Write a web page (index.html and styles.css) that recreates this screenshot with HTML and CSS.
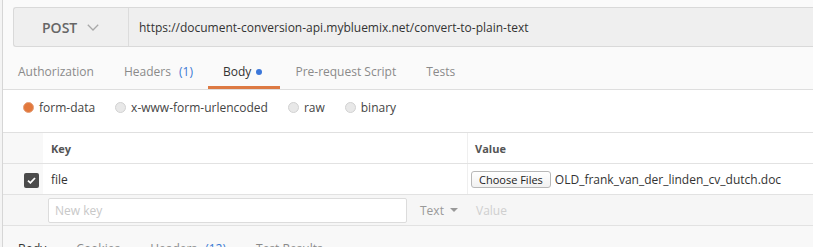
FILE: index.html
```html
<!DOCTYPE html>
<html lang="en">
<head>
    <meta charset="UTF-8">
    <title>POST convert-to-plain-text</title>
    <link rel="stylesheet" href="styles.css">
</head>
<body>

    <div class="app">
        <!-- barra de la petición -->
        <div class="url-row">
            <div class="url-bar">
                <div class="method">
                    POST
                    <svg class="chevron" width="12" height="7" viewBox="0 0 12 7"><polyline points="0.8,0.8 6,6 11.2,0.8" fill="none" stroke="#a8a8a8" stroke-width="1.3"/></svg>
                </div>
                <div class="url">https://document-conversion-api.mybluemix.net/convert-to-plain-text</div>
            </div>
        </div>

        <nav class="tabs">
            <div class="tab">Authorization</div>
            <div class="tab">Headers <span class="count">(1)</span></div>
            <div class="tab active">Body <span class="dot"></span></div>
            <div class="tab">Pre-request Script</div>
            <div class="tab">Tests</div>
        </nav>

        <div class="body-types">
            <label class="option"><span class="radio checked"></span>form-data</label>
            <label class="option"><span class="radio"></span>x-www-form-urlencoded</label>
            <label class="option"><span class="radio"></span>raw</label>
            <label class="option"><span class="radio"></span>binary</label>
        </div>

        <div class="kv">
            <div class="kv-row kv-head">
                <div class="cell check-col"></div>
                <div class="cell key-col">Key</div>
                <div class="cell value-col">Value</div>
            </div>
            <div class="kv-row">
                <div class="cell check-col">
                    <span class="checkbox">
                        <svg width="9" height="7" viewBox="0 0 9 7"><polyline points="1,3.6 3.4,5.8 8,1" fill="none" stroke="#fff" stroke-width="1.8"/></svg>
                    </span>
                </div>
                <div class="cell key-col">file</div>
                <div class="cell value-col">
                    <button class="file-button">Choose Files</button>
                    <span class="file-name">OLD_frank_van_der_linden_cv_dutch.doc</span>
                </div>
            </div>
            <div class="kv-row new-row">
                <div class="cell check-col"></div>
                <div class="cell key-col">
                    <input class="new-key" type="text" placeholder="New key">
                    <span class="type-select">Text <span class="caret"></span></span>
                </div>
                <div class="cell value-col placeholder">Value</div>
            </div>
        </div>

        <nav class="tabs response-tabs">
            <div class="tab current">Body</div>
            <div class="tab">Cookies</div>
            <div class="tab">Headers <span class="count">(12)</span></div>
            <div class="tab">Test Results</div>
        </nav>
    </div>

</body>
</html>
```

FILE: styles.css
```css
* { box-sizing: border-box; }
body { margin: 0; font-family: 'Open Sans', sans-serif; background-color: #f4f4f4; color: #333; }

.app { margin-left: 2px; height: 247px; overflow: hidden; border-left: 1px solid #d6d6d6; background-color: #fafafa; }

/* Barra de URL */
.url-row { padding: 7px 0 0 10px; }
.url-bar { display: flex; height: 40px; border: 1px solid #d9d9d9; border-right: none; border-radius: 3px 0 0 3px; background-color: #efefef; }
.method { width: 115px; display: flex; align-items: center; gap: 10px; padding-left: 28px; border-right: 1px solid #dcdcdc; font-size: 14px; font-weight: 600; color: #666; }
.chevron { margin-top: 1px; }
.url { display: flex; align-items: center; padding-left: 10px; font-size: 12px; color: #333; white-space: nowrap; }

/* Pestañas */
.tabs { display: flex; height: 43px; border-bottom: 1px solid #dedede; }
.tab { padding: 16px 15px 0; font-size: 12px; line-height: 17px; color: #8a8a8a; white-space: nowrap; border-bottom: 3px solid transparent; }
.tab.active { color: #333; border-bottom-color: #dd7a43; padding-right: 18px; }
.count { margin-left: 5px; color: #3a78d4; }
.dot { display: inline-block; width: 6px; height: 6px; margin-left: 2px; border-radius: 50%; background-color: #3b77da; vertical-align: 1px; }

/* Tipos de cuerpo */
.body-types { display: flex; align-items: center; height: 42px; padding: 0 0 8px 20px; background-color: #fff; }
.option { display: flex; align-items: center; gap: 5px; margin-right: 20px; font-size: 12px; color: #444; }
.radio { width: 11px; height: 11px; border-radius: 50%; border: 1px solid #d2d2d2; background-color: #e8e8e8; }
.radio.checked { border-color: #e6a17b; background-color: #e2783c; }

/* Tabla clave / valor */
.kv { border-top: 1px solid #e0e0e0; background-color: #fff; }
.kv-row { display: grid; grid-template-columns: 40px 424px 1fr; height: 31px; border-bottom: 1px solid #e2e2e2; }
.cell { display: flex; align-items: center; font-size: 12px; color: #333; white-space: nowrap; }
.check-col { background-color: #f8f8f8; justify-content: flex-end; padding-right: 4px; }
.key-col { padding-left: 8px; }
.value-col { padding-left: 7px; border-left: 1px solid #efefef; }
.kv-head .cell { font-size: 11px; font-weight: 700; color: #555; }

.checkbox { display: flex; justify-content: center; align-items: center; width: 15px; height: 15px; margin-top: 2px; border-radius: 2px; background-color: #4b4b4b; }
.file-button { height: 17px; padding: 0 7px; margin: 1px 4px 0 -4px; font-family: 'Open Sans', sans-serif; font-size: 11px; color: #222; border: 1px solid #b8b8b8; border-radius: 3px; background: linear-gradient(#ffffff, #f1f1f1); }
.file-name { font-size: 12px; color: #333; }

.new-row { background-color: #f6f6f6; }
.new-row .check-col { background-color: #f6f6f6; }
.new-row .key-col { padding-left: 5px; }
.new-row .value-col { border-left: none; padding-left: 9px; }
.new-key { width: 359px; height: 25px; margin: 1px 0 0; padding: 0 6px; font-family: 'Open Sans', sans-serif; font-size: 12px; border: 1px solid #dcdcdc; border-radius: 2px; background-color: #fff; }
.new-key::placeholder { color: #c8c8c8; }
.type-select { display: flex; align-items: center; gap: 6px; margin-left: 13px; color: #999; }
.caret { width: 0; height: 0; border-left: 4px solid transparent; border-right: 4px solid transparent; border-top: 4px solid #999; }
.placeholder { color: #cfcfcf; }

/* Pestañas de respuesta */
.response-tabs { border-bottom: none; height: auto; padding-top: 14px; background-color: #f8f8f8; }
.response-tabs .tab { padding-top: 0; }
.response-tabs .tab.current { color: #333; }
```
